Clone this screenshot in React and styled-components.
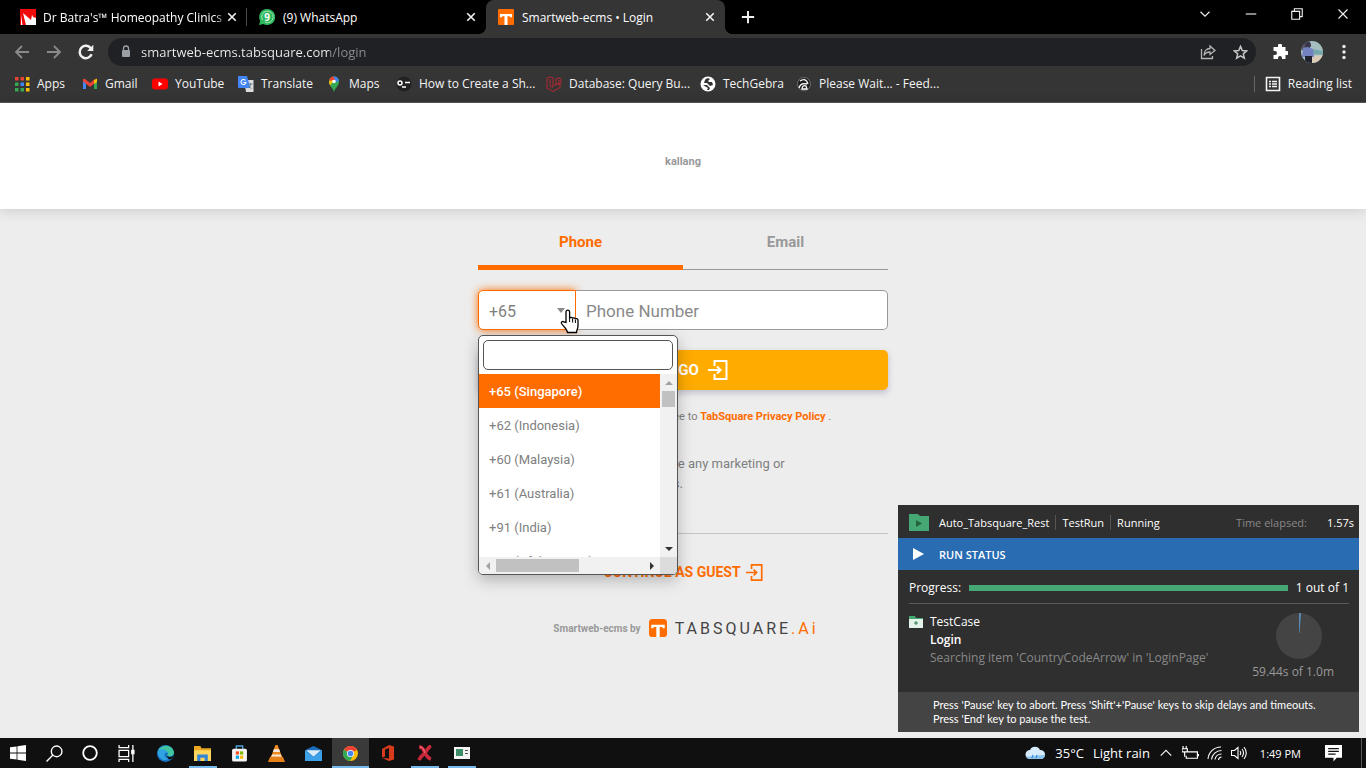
import React from "react";
import styled, { createGlobalStyle, css } from "styled-components";

const ui = '"Open Sans", "Noto Sans", sans-serif';
const brand = 'Roboto, "Liberation Sans", sans-serif';
const orange = "#ff6c00";

const GlobalStyle = createGlobalStyle`
  *, *::before, *::after { box-sizing: border-box; }
  body { margin: 0; background: #ececec; font-family: ${ui}; }
  button, input, select { font: inherit; color: inherit; margin: 0; }
  button { background: none; border: 0; padding: 0; cursor: pointer; }
  ul { list-style: none; margin: 0; padding: 0; }
  p { margin: 0; }
  svg { display: block; flex: none; }
`;

const Screen = styled.div`
  display: flex;
  flex-direction: column;
  min-height: 100vh;
`;

/* ---------- Browser chrome ---------- */

const TabStrip = styled.header`
  display: flex;
  height: 34px;
  padding-left: 8px;
  background: #000;
  color: #fff;
`;

const TabItem = styled.div`
  position: relative;
  display: flex;
  align-items: center;
  gap: 8px;
  width: 239px;
  padding: 0 9px 0 12px;
  font-size: 12px;
  border-radius: 8px 8px 0 0;
  background: ${(p) => (p.$active ? "#353535" : "transparent")};

  ${(p) => p.$divided && css`
    gap: 7px;
    &::after {
      content: "";
      position: absolute;
      right: 0;
      top: 8px;
      height: 18px;
      width: 1px;
      background: #4a4a4a;
    }
  `}
  ${(p) => p.$active && css`
    &::before, &::after {
      content: "";
      position: absolute;
      bottom: 0;
      width: 8px;
      height: 8px;
    }
    &::before {
      left: -8px;
      background: radial-gradient(circle at 0 0, #000 8px, #353535 8px);
    }
    &::after {
      right: -8px;
      background: radial-gradient(circle at 100% 0, #000 8px, #353535 8px);
    }
  `}
`;

const TabTitle = styled.span`
  flex: 1;
  min-width: 0;
  overflow: hidden;
  white-space: nowrap;
  ${(p) => p.$fade && css`
    margin-right: -6px;
    mask-image: linear-gradient(90deg, #000 94%, rgba(0, 0, 0, 0.3));
  `}
`;

const IconButton = styled.button`
  display: grid;
  place-items: center;
  width: ${(p) => p.$w || 32}px;
  height: ${(p) => p.$h || 28}px;
  color: ${(p) => p.$color || "#f1f1f1"};
  flex: none;
`;

const WindowControls = styled.div`
  display: flex;
  margin-left: auto;
`;

const Toolbar = styled.div`
  display: flex;
  align-items: center;
  height: 36px;
  padding: 0 6px;
  background: #353535;
`;

const AddressBar = styled.div`
  flex: 1;
  display: flex;
  align-items: center;
  height: 28px;
  margin: 0 8px 0 6px;
  padding-left: 13px;
  border-radius: 14px;
  background: #202124;
`;

const AddressInput = styled.input`
  flex: 1;
  min-width: 0;
  margin-left: 10px;
  padding: 0;
  border: 0;
  outline: 0;
  font-size: 13px;
  color: transparent;
  background: linear-gradient(90deg, #f1f1f1 188px, #8d8f93 188px);
  background-clip: text;
  -webkit-background-clip: text;
`;

const Avatar = styled.span`
  display: block;
  width: 22px;
  height: 22px;
  border-radius: 50%;
  overflow: hidden;
`;

const BookmarkBar = styled.nav`
  display: flex;
  align-items: center;
  height: 33px;
  padding: 0 14px 5px;
  background: #353535;
  border-bottom: 1px solid #555;
  color: #f4f4f4;
  font-size: 12px;
`;

const Bookmark = styled.a`
  display: flex;
  align-items: center;
  gap: 7px;
  width: ${(p) => (p.$w ? `${p.$w}px` : "auto")};
  color: inherit;
  text-decoration: none;
  white-space: nowrap;
`;

const ReadingList = styled.button`
  display: flex;
  align-items: center;
  gap: 7px;
  height: 16px;
  margin-left: auto;
  padding-left: 10px;
  border-left: 1px solid #666;
  white-space: nowrap;
`;

/* ---------- Login page ---------- */

const Page = styled.main`
  position: relative;
  flex: 1;
  background: #ededed;
  font-family: ${brand};
  color: #808080;
`;

const OutletHeader = styled.div`
  display: grid;
  place-items: center;
  height: 106px;
  padding-top: 10px;
  background: #fff;
  box-shadow: 0 2px 12px rgba(0, 0, 0, 0.14);
  font-size: 11px;
  font-weight: 700;
  color: #999;
`;

const Form = styled.form`
  width: 410px;
  max-width: 100%;
  margin: 0 auto;
`;

const MethodTabs = styled.div`
  display: flex;
  align-items: flex-end;
  height: 61px;
`;

const MethodTab = styled.button`
  flex: 1;
  height: 61px;
  padding-top: 9px;
  padding-bottom: ${(p) => (p.$active ? 0 : 4)}px;
  border-bottom: ${(p) => (p.$active ? `5px solid ${orange}` : "1px solid #999")};
  font-size: 15px;
  font-weight: 700;
  color: ${(p) => (p.$active ? orange : "#999")};
`;

const FieldRow = styled.div`
  position: relative;
  display: flex;
  height: 40px;
  margin-top: 20px;
`;

const CodeBox = styled.div`
  position: relative;
  width: 98px;
  border: 1px solid ${orange};
  border-radius: 5px 0 0 5px;
  background: #fff;
  box-shadow: 0 0 8px ${orange};
`;

const CodeSelect = styled.select`
  width: 100%;
  height: 100%;
  padding: 2px 10px 0;
  border: 0;
  outline: 0;
  appearance: none;
  font-size: 16px;
  background: transparent;
`;

const CodeCaret = styled.svg`
  position: absolute;
  right: 10px;
  top: 17px;
  pointer-events: none;
`;

const PhoneInput = styled.input`
  position: relative;
  flex: 1;
  min-width: 0;
  padding: 2px 10px 0;
  border: 1px solid #999;
  border-left: 0;
  border-radius: 0 5px 5px 0;
  outline: 0;
  background: #fff;
  font-size: 17px;
  &::placeholder { color: #8a8a8a; opacity: 1; }
`;

const Pointer = styled.svg`
  position: absolute;
  left: 82px;
  top: 18px;
  z-index: 3;
`;

const Dropdown = styled.div`
  position: absolute;
  z-index: 2;
  top: 45px;
  left: 0;
  width: 200px;
  border: 1px solid #555;
  border-radius: 5px;
  overflow: hidden;
  background: #fff;
  box-shadow: 0 5px 15px rgba(0, 0, 0, 0.25);
  font-size: 13px;
`;

const SearchBox = styled.div`
  padding: 4px;
`;

const SearchInput = styled.input`
  display: block;
  width: 100%;
  height: 30px;
  padding: 0 8px;
  border: 1px solid #555;
  border-radius: 5px;
  outline: 0;
`;

const Scroller = styled.div`
  display: grid;
  grid-template: 183px 17px / 1fr 17px;
`;

const OptionList = styled.ul`
  overflow: hidden;
`;

const Option = styled.li`
  height: 34px;
  padding: 1px 10px 0;
  line-height: 34px;
  white-space: nowrap;
  color: ${(p) => (p.$active ? "#fff" : "#808080")};
  background: ${(p) => (p.$active ? orange : "transparent")};
  font-weight: ${(p) => (p.$active ? 500 : 400)};
`;

const ScrollTrack = styled.div`
  display: flex;
  flex-direction: ${(p) => (p.$vertical ? "column" : "row")};
  align-items: center;
  background: #f1f1f1;
`;

const ScrollArrow = styled.span`
  display: grid;
  place-items: center;
  width: 17px;
  height: 17px;
`;

const ScrollThumb = styled.span`
  width: ${(p) => (p.$vertical ? 13 : 83)}px;
  height: ${(p) => (p.$vertical ? 16 : 13)}px;
  background: #c1c1c1;
  margin-${(p) => (p.$vertical ? "bottom" : "right")}: auto;
`;

const ScrollCorner = styled.div`
  background: #dcdcdc;
`;

const GoButton = styled.button`
  display: flex;
  align-items: center;
  justify-content: center;
  gap: 9px;
  width: 100%;
  height: 40px;
  margin-top: 20px;
  padding-left: 40px;
  border-radius: 5px;
  background: #ffab00;
  box-shadow: 0 3px 6px rgba(90, 90, 130, 0.3);
  color: #fff;
  font-size: 15px;
  font-weight: 700;
`;

const PolicyNote = styled.p`
  margin-top: 19px;
  padding-right: 4px;
  line-height: 16px;
  font-size: 11px;
  text-align: center;
`;

const PolicyLink = styled.a`
  color: ${orange};
  font-weight: 700;
  text-decoration: none;
`;

const Consent = styled.label`
  display: flex;
  align-items: flex-start;
  gap: 12px;
  margin-top: 29px;
  padding-left: 36px;
  height: 80px;
  border-bottom: 1px solid #c4c4c4;
  line-height: 20px;
  font-size: 13px;
`;

const GuestLink = styled.a`
  display: flex;
  align-items: center;
  justify-content: center;
  gap: 5px;
  margin-top: 28px;
  line-height: 20px;
  color: ${orange};
  font-size: 14px;
  font-weight: 700;
  text-decoration: none;
`;

const PoweredBy = styled.footer`
  display: flex;
  align-items: center;
  justify-content: center;
  gap: 8px;
  height: 20px;
  margin-top: 36px;
  padding-left: 6px;
  font-size: 10px;
  font-weight: 700;
  color: #999;
`;

const Wordmark = styled.span`
  font-size: 16px;
  font-weight: 400;
  letter-spacing: 3px;
  color: #444;
  b { color: ${orange}; font-weight: 400; }
`;

/* ---------- Test run overlay ---------- */

const RunPanel = styled.aside`
  position: absolute;
  right: 7px;
  bottom: 6px;
  z-index: 4;
  width: 461px;
  background: #2f2f2f;
  color: #fff;
  font-family: ${ui};
  font-size: 12px;
  white-space: nowrap;
`;

const RunHeader = styled.div`
  display: flex;
  align-items: center;
  height: 33px;
  padding: 2px 5px 0 11px;
  font-size: 11px;
`;

const Crumb = styled.span`
  padding: 0 6px;
  border-left: ${(p) => (p.$first ? "0" : "1px solid #555")};
  margin-left: ${(p) => (p.$first ? 4 : 0)}px;
`;

const Elapsed = styled.span`
  display: flex;
  gap: 20px;
  margin-left: auto;
  color: #888;
  b { color: #fff; font-weight: 400; }
`;

const RunBanner = styled.div`
  display: flex;
  align-items: center;
  gap: 15px;
  height: 32px;
  padding-left: 14px;
  background: #2a6cb2;
  font-size: 11px;
  font-weight: 600;
`;

const ProgressRow = styled.div`
  display: flex;
  align-items: center;
  gap: 8px;
  height: 34px;
  margin: 0 10px 0 11px;
  padding-top: 2px;
  border-bottom: 1px solid #5a5a5a;
`;

const ProgressBar = styled.div`
  flex: 1;
  height: 6px;
  background: #45a874;
`;

const RunBody = styled.div`
  display: flex;
  justify-content: space-between;
  height: 88px;
  padding: 9px 25px 0 11px;
`;

const CaseGrid = styled.div`
  display: grid;
  grid-template-columns: 16px auto;
  column-gap: 5px;
  align-content: start;
  align-items: center;
  line-height: 18px;
`;

const CaseLine = styled.span`
  grid-column: 2;
  color: ${(p) => (p.$dim ? "#888" : "#fff")};
  font-weight: ${(p) => (p.$strong ? 600 : 400)};
`;

const TimeoutClock = styled.div`
  display: flex;
  flex-direction: column;
  align-items: center;
  gap: 4px;
  color: #999;
  svg { margin-left: 12px; }
`;

const RunHint = styled.p`
  padding: 6px 35px;
  line-height: 14px;
  font-family: Lato, ${ui};
  font-size: 11px;
  background: #444;
`;

/* ---------- Taskbar ---------- */

const Taskbar = styled.footer`
  display: flex;
  align-items: center;
  height: 30px;
  background: #101010;
  color: #fff;
`;

const TaskGroup = styled.div`
  display: flex;
  margin-right: 3px;
`;

const TaskButton = styled.button`
  display: grid;
  place-items: center;
  width: ${(p) => (p.$app ? 37 : 36)}px;
  height: 30px;
  background:
    linear-gradient(#76b9ed, #76b9ed) center bottom / ${(p) => (!p.$running ? "0" : p.$focused ? "100%" : "28px")} 2px no-repeat
    ${(p) => (p.$focused ? "#3a3a3a" : "transparent")};
`;

const Tray = styled.div`
  display: flex;
  align-items: center;
  gap: 8px;
  height: 30px;
  margin-left: auto;
  margin-right: 4px;
  padding-right: 19px;
  border-right: 1px solid #555;
  white-space: nowrap;
`;

const Weather = styled.button`
  display: flex;
  align-items: center;
  gap: 9px;
  font-size: 13px;
`;

const Clock = styled.time`
  font-size: 11px;
  margin: 0 15px 0 5px;
`;

/* ---------- Icons ---------- */

const Line = ({ s = 16, w = 1.5, children }) => (
  <svg width={s} height={s} viewBox="0 0 16 16" fill="none" stroke="currentColor" strokeWidth={w}>{children}</svg>
);
const Art = ({ s = 16, children }) => (
  <svg width={s} height={s} viewBox="0 0 16 16">{children}</svg>
);

const CloseIcon = () => <Line s={12} w={2.2}><path d="M3 3l10 10M13 3L3 13" /></Line>;

const BatraIcon = () => (
  <Art>
    <path fill="#f00b0b" d="M0 0h16v16H0z" />
    <path fill="#fff" d="M3 4l8 7 1-5 4 2v8H6z" />
    <path fill="#fff" d="M1 6l1.500 10H1z" />
    <path fill="#f00b0b" d="M12 5l4 1v3l-3-1z" />
  </Art>
);
const WhatsAppIcon = () => (
  <Art>
    <path fill="#2eb85c" d="M8 0a8 8 0 1 1-3.700 15L0 16l1.200-4A8 8 0 0 1 8 0z" />
    <path d="M3.500 11A5.800 5.800 0 1 1 6 13.200" fill="none" stroke="#bdebca" strokeWidth=".8" />
    <text x="8" y="11.500" textAnchor="middle" fontFamily="Open Sans" fontSize="10" fontWeight="700" fill="#fff">9</text>
  </Art>
);
const TabSquareIcon = ({ s = 16, r = 1 }) => (
  <Art s={s}>
    <rect width="16" height="16" rx={r} fill={orange} />
    <path fill="#fff" d="M2 5h12v3.200h-2V7.200H9.500V16h-3V7.200H4v1H2z" />
  </Art>
);
const BackIcon = () => <Line w={1.8}><path d="M15 8H2M8 2L2 8l6 6" /></Line>;
const ForwardIcon = () => <Line w={1.8}><path d="M1 8h13M8 2l6 6-6 6" /></Line>;
const ReloadIcon = () => (
  <Line s={18} w={2.2}><path d="M13 10a5.500 5.500 0 1 1-.5-5" /><path d="M14.500 1.500V7H9z" fill="currentColor" stroke="none" /></Line>
);
const LockIcon = () => (
  <svg width="10" height="14" viewBox="0 0 10 14">
    <rect x="1" y="5" width="8" height="7" rx="1" fill="#9aa0a6" />
    <path d="M2.500 5V3.500a2.500 2.500 0 0 1 5 0V5" fill="none" stroke="#9aa0a6" strokeWidth="1.300" />
  </svg>
);
const ShareIcon = () => (
  <Line w={1.3}><path d="M1.500 5v9.500h11V12" /><path d="M10 2l5 4.500-5 4V8C7 8 5 9 4 11.500 4 7 6.500 4.500 10 4.500z" /></Line>
);
const StarIcon = () => (
  <Line s={15} w={1.6}><path d="M8 1.500l1.900 4.400 4.700.4-3.600 3.100 1.100 4.700L8 11.600l-4.100 2.500L5 9.400 1.400 6.300l4.700-.4z" /></Line>
);
const PuzzleIcon = () => (
  <Art><path fill="#fff" d="M6 1.500a2 2 0 0 1 4 0V3h3.500v4H15a2 2 0 0 1 0 4h-1.500v4H10v-1a2 2 0 0 0-4 0v1H1.500v-4H3a2 2 0 0 0 0-4H1.500V3H6z" /></Art>
);
const KebabIcon = () => (
  <Art><circle cx="8" cy="2.500" r="1.700" fill="#eee" /><circle cx="8" cy="8" r="1.700" fill="#eee" /><circle cx="8" cy="13.500" r="1.700" fill="#eee" /></Art>
);
const Portrait = () => (
  <svg width="22" height="22" viewBox="0 0 22 22">
    <path fill="#a5bfc0" d="M0 0h22v22H0z" />
    <path fill="#75a7ad" d="M11 8l11 2v4l-11-1z" />
    <path fill="#d9cbb5" d="M10 15l12-1v8H10z" />
    <path fill="#545366" d="M0 0h9v9H0z" />
    <circle cx="7" cy="4" r="3" fill="#39354a" />
    <path fill="#7582c1" d="M2 7l5-1 5 2 1 8H1z" />
    <path fill="#20212f" d="M4 15h7v7H4z" />
  </svg>
);
const AppsIcon = () => (
  <Art>
    {["#ea4335", "#ea4335", "#fbbc04", "#34a853", "#4285f4", "#fbbc04", "#34a853", "#34a853", "#fbbc04"].map((c, i) => (
      <rect key={i} x={1 + (i % 3) * 5.5} y={1 + Math.floor(i / 3) * 5.5} width="3.500" height="3.500" fill={c} />
    ))}
  </Art>
);
const GmailIcon = () => (
  <Art>
    <path fill="#4285f4" d="M1 4v9h3V7z" /><path fill="#34a853" d="M15 4v9h-3V7z" />
    <path fill="#ea4335" d="M1 3h2l5 4 5-4v4l-5 4-5-4-2-1.500z" />
    <path fill="#fbbc04" d="M12 4l3-1.500V6l-3 2z" />
  </Art>
);
const YouTubeIcon = () => (
  <Art><rect y="2.500" width="16" height="11" rx="3" fill="#f00" /><path d="M6.500 5.500v5L10.500 8z" fill="#fff" /></Art>
);
const TranslateIcon = () => (
  <Art>
    <path fill="#dcdcdc" d="M6 4h9.500v12H8z" />
    <path fill="#4285f4" d="M0 0h9l3.500 12H1a1 1 0 0 1-1-1z" />
    <path d="M7.500 4.500a2.500 2.500 0 1 0 .5 2H5.500" fill="none" stroke="#fff" strokeWidth="1.100" />
    <path d="M10.500 8h4M12.500 7v1c0 2-1 3-2 4m0-2.500c.5 1.500 2 2.500 3 3" fill="none" stroke="#607d8b" strokeWidth=".9" />
  </Art>
);
const MapsIcon = () => (
  <Art>
    <path fill="#34a853" d="M8 16C7 12 3 10 3 5.500a5 5 0 0 1 10 0C13 10 9 12 8 16z" />
    <path fill="#4285f4" d="M7 .6A5 5 0 0 1 13 5L10 6z" /><path fill="#ea4335" d="M3.300 4A5 5 0 0 1 7.500.5L9 4 5 7z" />
    <path fill="#fbbc04" d="M3 5l5-1-3.800 5.500A6 6 0 0 1 3 5z" /><circle cx="8" cy="5.500" r="1.800" fill="#fff" />
  </Art>
);
const GuideIcon = () => (
  <Art><circle cx="8" cy="8" r="7.500" fill="#222" /><g fill="none" stroke="#fff" strokeWidth="1.500"><circle cx="4" cy="7" r="2" /><path d="M9 6.500h5M6 11h4" /></g></Art>
);
const LaravelIcon = () => (
  <Line w={1.2}><g stroke="#9c2b32"><path d="M1 2l3-1 3 1v8l6-3V4M1 2v10l6 3.500 7-4V8M4 3v7l3 1.500M10 3l3-1 2 1v4l-3 1.500-2-1z" /></g></Line>
);
const GlobeIcon = () => (
  <Art><circle cx="8" cy="8" r="7.500" fill="#fff" /><path fill="#333" d="M5 4c1-2 4-2 5-1L8 5l1 1h3l1 3-3 1-3-3H4zM3 9l4 0 3 3-1 2H7l1-2z" /></Art>
);
const FeedIcon = () => (
  <Line w={1.3}><circle cx="8" cy="8" r="6.500" fill="#1c1c1c" stroke="#999" strokeWidth=".6" /><path d="M4 5c4-3 7-1 8 3M3 12c1-4 4-5 8-4M6 13c0-3 2-4 4-3l1 3z" stroke="#fff" /></Line>
);
const ReadingIcon = () => (
  <Line w={1.6}><path d="M1.500 1.500h13v13h-13zM4 5.500h2M7 5.500h5M4 8h2M7 8h5M4 10.500h2M7 10.500h5" /></Line>
);
const EnterIcon = ({ s = 20 }) => (
  <svg width={s} height={s} viewBox="0 0 20 20" fill="none" stroke="currentColor" strokeWidth="2">
    <path d="M6.500 6V1h12v18h-12v-5M0 10h12M9 6.500l3.500 3.500L9 13.500" />
  </svg>
);
const Triangle = ({ d, c }) => <svg width="8" height="8" viewBox="0 0 8 8"><path d={d} fill={c} /></svg>;
const FolderRunIcon = () => (
  <svg width="20" height="17" viewBox="0 0 20 17"><path fill="#45a874" d="M0 0h9l2 2h9v15H0z" /><path fill="#24633f" d="M7 6l6 3.500L7 13z" /></svg>
);
const FolderCaseIcon = () => (
  <svg width="14" height="12" viewBox="0 0 14 12"><path fill="#45a874" d="M0 0h6l1 2h7v3H0z" /><path fill="#e4f3ea" d="M0 3h14v9H0z" /><path stroke="#2d7d50" d="M7 5v4M5 7h4" /></svg>
);

const WindowsIcon = () => <Art><path fill="#fff" d="M0 2.300l6.600-.9v6.200H0zM7.400 1.300L16 0v7.600H7.400zM0 8.400h6.600v6.200L0 13.700zM7.400 8.400H16V16l-8.600-1.300z" /></Art>;
const SearchIcon = () => <Line s={17} w={1.3}><circle cx="10" cy="6" r="5" /><path d="M6.500 9.500L.5 15.500" /></Line>;
const CortanaIcon = () => <Line s={16} w={1.8}><circle cx="8" cy="8" r="6.800" /></Line>;
const TaskViewIcon = () => <Line s={17} w={1.2}><path d="M1 0v2.500h9V0M1 16v-2.500h9V16M1 5h9v6H1zM14 0v16" /><path d="M13 5h2v3h-2z" fill="currentColor" /></Line>;
const EdgeIcon = () => (
  <Art s={17}>
    <circle cx="8" cy="8" r="8" fill="#1673c4" />
    <path fill="#3fc5a0" d="M1 5C4-1 15-1 16 7c0 4-5 4.500-6.500 3C12 7 8 4 1 5z" />
    <path fill="#31a3e2" d="M.5 6C4 2.500 9 4 9.500 7 6 7 6 12 11 13c-4 3-10 0-10.500-7z" />
    <path fill="#101010" d="M9.500 10c2 2 5 1.500 6.500-1-.5 2-1.500 3.500-3 4.500-2 0-3.500-1.500-3.500-3.500z" />
  </Art>
);
const ExplorerIcon = () => <Art s={17}><path fill="#e9a820" d="M0 1h6l1 2h9v12H0z" /><path fill="#ffd75e" d="M0 5h16v10H0z" /><path fill="#3386d6" d="M3 9h10v6h-3v-3H6v3H3z" /></Art>;
const StoreIcon = () => (
  <Art s={17}><path d="M5 4V1h6v3" fill="none" stroke="#4aa3d8" strokeWidth="1.300" /><rect x="1" y="3.500" width="14" height="12" rx="1.500" fill="#f4f4f4" />
    <path fill="#f25022" d="M4.500 6H7.500v3h-3z" /><path fill="#7fba00" d="M8.500 6h3v3h-3z" /><path fill="#00a4ef" d="M4.500 10h3v3h-3z" /><path fill="#ffb900" d="M8.500 10h3v3h-3z" /></Art>
);
const VlcIcon = () => <Art s={17}><path fill="#f08a1c" d="M7 0h2l4.500 12h-11z" /><path fill="#f7e9dc" d="M5.500 4h5l.9 2.500H4.600zM3.800 9h8.400l.8 2H3z" /><path fill="#e7811a" d="M2 11h12l2 5H0z" /></Art>;
const MailIcon = () => <Art s={17}><path fill="#1b6dbd" d="M0 5l8-4 8 4v10H0z" /><path fill="#d9ecf9" d="M1 5h14l-7 6z" /><path fill="#3ba0e6" d="M0 5l8 6 8-6v10H0z" /></Art>;
const ChromeIcon = () => (
  <Art s={15}><circle cx="8" cy="8" r="8" fill="#fbbc04" /><path fill="#ea4335" d="M8 8L1 4a8 8 0 0 1 14 0z" /><path fill="#34a853" d="M1 4a8 8 0 0 0 6.500 12L11 9.500 8 8z" /><circle cx="8" cy="8" r="3.800" fill="#fff" /><circle cx="8" cy="8" r="3" fill="#4285f4" /></Art>
);
const OfficeIcon = () => <Art s={16}><path fill="#d83b1c" d="M2 4l7-4 5 1.500v13L9 16l-7-3 7 .5V3L5 4.500v7l-3 1z" /></Art>;
const RanorexIcon = () => <Art s={16}><path d="M2 2c5 0 5 5 6 6s2 5 6 6M14 1c-3 1-5 6-6 7s-4 3-6 7" fill="none" stroke="#c9293a" strokeWidth="3.600" /><path d="M3 2c4 0 4 5 5 6" fill="none" stroke="#f28b95" /></Art>;
const ConsoleIcon = () => <Art s={16}><path fill="#f4f4f4" d="M0 2h16v12H0z" /><path fill="#3e8d69" d="M2 4h7v7H2z" /><path fill="#555" d="M11 5h3v1h-3zM11 8h3v1h-3z" /></Art>;
const CloudIcon = () => (
  <svg width="21" height="16" viewBox="0 0 21 16"><path fill="#d6ebfb" d="M5 14a4.500 4.500 0 0 1 0-9A5.500 5.500 0 0 1 15 5a4.500 4.500 0 0 1 1 9z" /><path fill="#8cc3ee" d="M5 14a4 4 0 0 1-4-3c5 2 9-1 19-1a4.300 4.300 0 0 1-4 4z" /><path d="M8 10l-1 3M12 10l-1 3" stroke="#3f8fe0" strokeWidth="1.400" /></svg>
);
const BatteryIcon = () => <Line s={17} w={1.1}><path d="M5 6.500h9.500v6H4V10M15.500 8.500v2M1 1v2M4 1v2M0 3.500h5v3H0zM2.500 7v4" /></Line>;
const WifiIcon = () => <Line s={16} w={1.1}><path d="M1 14A13 13 0 0 1 14 2M4.500 14.500A10 10 0 0 1 14.500 5.500M8 14.500a6.500 6.500 0 0 1 6.500-5.500M11.500 15a3.500 3.500 0 0 1 3-3" /></Line>;
const SpeakerIcon = () => <Line s={16} w={1.1}><path d="M.5 5.500h3l3.500-3v11l-3.500-3h-3zM9 6c1 1.300 1 2.700 0 4M11 4c2 2.600 2 5.400 0 8M13 2c3 4 3 8 0 12" /></Line>;
const NoticeIcon = () => <Art s={17}><path fill="#fff" d="M0 0h16v12H11l-3 3.500V12H0z" /><path stroke="#111" strokeWidth="1.200" d="M3 3.500h10M3 6h10M3 8.500h7" /></Art>;

const bookmarks = [
  ["Apps", AppsIcon, 68],
  ["Gmail", GmailIcon, 70],
  ["YouTube", YouTubeIcon, 86],
  ["Translate", TranslateIcon, 88],
  ["Maps", MapsIcon, 70],
  ["How to Create a Sh...", GuideIcon, 150],
  ["Database: Query Bu...", LaravelIcon, 154],
  ["TechGebra", GlobeIcon, 96],
  ["Please Wait... - Feed...", FeedIcon],
];

const countries = ["+65 (Singapore)", "+62 (Indonesia)", "+60 (Malaysia)", "+61 (Australia)", "+91 (India)", "+93 (Afghanistan)"];

const apps = [
  ["Edge", EdgeIcon], ["File Explorer", ExplorerIcon, true], ["Store", StoreIcon], ["VLC", VlcIcon], ["Mail", MailIcon],
  ["Chrome", ChromeIcon, true, true], ["Office", OfficeIcon], ["Ranorex", RanorexIcon, true], ["Console", ConsoleIcon, true],
];

function BrowserChrome() {
  return (
    <>
      <TabStrip>
        <TabItem $divided>
          <BatraIcon />
          <TabTitle $fade>Dr Batra's™ Homeopathy Clinics</TabTitle>
          <IconButton $w={12} aria-label="Close tab"><CloseIcon /></IconButton>
        </TabItem>
        <TabItem>
          <WhatsAppIcon />
          <TabTitle>(9) WhatsApp</TabTitle>
          <IconButton $w={12} aria-label="Close tab"><CloseIcon /></IconButton>
        </TabItem>
        <TabItem $active>
          <TabSquareIcon />
          <TabTitle>Smartweb-ecms • Login</TabTitle>
          <IconButton $w={12} aria-label="Close tab"><CloseIcon /></IconButton>
        </TabItem>
        <IconButton $w={46} $h={34} aria-label="New tab"><Line s={14} w={2.2}><path d="M8 1v14M1 8h14" /></Line></IconButton>
        <WindowControls>
          <IconButton $w={46} aria-label="Search tabs"><Line s={12}><path d="M2 5l6 6 6-6" /></Line></IconButton>
          <IconButton $w={46} aria-label="Minimize"><Line s={12}><path d="M1 8h14" /></Line></IconButton>
          <IconButton $w={46} aria-label="Restore"><Line s={12}><path d="M1 4.500h10.500V15H1zM4.500 4V1H15v10.500h-3" /></Line></IconButton>
          <IconButton $w={46} aria-label="Close"><Line s={12}><path d="M2 2l12 12M14 2L2 14" /></Line></IconButton>
        </WindowControls>
      </TabStrip>
      <Toolbar>
        <IconButton aria-label="Back" $color="#8a8a8a"><BackIcon /></IconButton>
        <IconButton aria-label="Forward" $color="#8a8a8a"><ForwardIcon /></IconButton>
        <IconButton aria-label="Reload"><ReloadIcon /></IconButton>
        <AddressBar>
          <LockIcon />
          <AddressInput aria-label="Address" defaultValue="smartweb-ecms.tabsquare.com/login" />
          <IconButton aria-label="Share" $color="#b5b5b5"><ShareIcon /></IconButton>
          <IconButton aria-label="Bookmark this page" $color="#c5c5c5"><StarIcon /></IconButton>
        </AddressBar>
        <IconButton aria-label="Extensions"><PuzzleIcon /></IconButton>
        <IconButton aria-label="Profile"><Avatar><Portrait /></Avatar></IconButton>
        <IconButton aria-label="Menu"><KebabIcon /></IconButton>
      </Toolbar>
      <BookmarkBar>
        {bookmarks.map(([name, Icon, w]) => (
          <Bookmark key={name} href="#" $w={w}><Icon />{name}</Bookmark>
        ))}
        <ReadingList><ReadingIcon />Reading list</ReadingList>
      </BookmarkBar>
    </>
  );
}

function CountryDropdown() {
  return (
    <Dropdown>
      <SearchBox><SearchInput type="search" aria-label="Search country code" /></SearchBox>
      <Scroller>
        <OptionList role="listbox" aria-label="Country codes">
          {countries.map((c, i) => (
            <Option key={c} role="option" aria-selected={i === 0} $active={i === 0}>{c}</Option>
          ))}
        </OptionList>
        <ScrollTrack $vertical>
          <ScrollArrow><Triangle d="M0 6l4-4 4 4z" c="#a3a3a3" /></ScrollArrow>
          <ScrollThumb $vertical />
          <ScrollArrow><Triangle d="M0 2l4 4 4-4z" c="#333" /></ScrollArrow>
        </ScrollTrack>
        <ScrollTrack>
          <ScrollArrow><Triangle d="M6 0L2 4l4 4z" c="#a3a3a3" /></ScrollArrow>
          <ScrollThumb />
          <ScrollArrow><Triangle d="M2 0l4 4-4 4z" c="#333" /></ScrollArrow>
        </ScrollTrack>
        <ScrollCorner />
      </Scroller>
    </Dropdown>
  );
}

function RunStatus() {
  return (
    <RunPanel>
      <RunHeader>
        <FolderRunIcon />
        <Crumb $first>Auto_Tabsquare_Rest</Crumb>
        <Crumb>TestRun</Crumb>
        <Crumb>Running</Crumb>
        <Elapsed>Time elapsed: <b>1.57s</b></Elapsed>
      </RunHeader>
      <RunBanner>
        <svg width="12" height="12" viewBox="0 0 12 12"><path d="M1 0l11 6-11 6z" fill="#fff" /></svg>
        RUN STATUS
      </RunBanner>
      <ProgressRow>
        Progress:
        <ProgressBar role="progressbar" aria-label="Progress" aria-valuenow={1} aria-valuemax={1} />
        1 out of 1
      </ProgressRow>
      <RunBody>
        <CaseGrid>
          <FolderCaseIcon />
          <CaseLine>TestCase</CaseLine>
          <CaseLine $strong>Login</CaseLine>
          <CaseLine $dim>Searching item 'CountryCodeArrow' in 'LoginPage'</CaseLine>
        </CaseGrid>
        <TimeoutClock>
          <svg width="46" height="46" viewBox="0 0 46 46"><circle cx="23" cy="23" r="23" fill="#444" /><path d="M23 0h2l-1.500 20H23z" fill="#5b8db8" /></svg>
          59.44s of 1.0m
        </TimeoutClock>
      </RunBody>
      <RunHint>
        Press 'Pause' key to abort. Press 'Shift'+'Pause' keys to skip delays and timeouts.<br />
        Press 'End' key to pause the test.
      </RunHint>
    </RunPanel>
  );
}

export default function App() {
  return (
    <Screen>
      <GlobalStyle />
      <BrowserChrome />
      <Page>
        <OutletHeader>kallang</OutletHeader>
        <Form onSubmit={(e) => e.preventDefault()}>
          <MethodTabs role="tablist">
            <MethodTab type="button" role="tab" aria-selected $active>Phone</MethodTab>
            <MethodTab type="button" role="tab" aria-selected={false}>Email</MethodTab>
          </MethodTabs>
          <FieldRow>
            <CodeBox>
              <CodeSelect aria-label="Country code" defaultValue="+65">
                <option>+65</option>
                <option>+62</option>
                <option>+60</option>
              </CodeSelect>
              <CodeCaret width="8" height="5" viewBox="0 0 8 5"><path d="M0 0h8L4 5z" fill="#8a8a8a" /></CodeCaret>
            </CodeBox>
            <PhoneInput type="tel" aria-label="Phone number" placeholder="Phone Number" />
            <CountryDropdown />
            <Pointer width="20" height="26" viewBox="0 0 20 26">
              <path d="M6 14.500V4a1.800 1.800 0 0 1 3.600 0v6.500c0-1.600 3-1.600 3 .3 0-1.300 2.800-1.200 2.800.6 0-1.200 2.600-1 2.600.9V18c0 3-1.500 4-1.500 6.500h-9C7 21 3.500 18.500 1.500 15.500c-.7-1.700 1-2.600 2.300-1.500z" fill="#fff" stroke="#000" strokeWidth="1.300" />
              <path d="M9.600 10v4M12.600 11v3.500M15.400 12v3" stroke="#000" />
            </Pointer>
          </FieldRow>
          <GoButton type="submit">GO<EnterIcon /></GoButton>
          <PolicyNote>
            By continuing, you hereby agree to <PolicyLink href="#">TabSquare Privacy Policy</PolicyLink> .
          </PolicyNote>
          <Consent>
            <input type="checkbox" />
            <span>I would not like to receive any marketing or<br />promotional newsletters.</span>
          </Consent>
          <GuestLink href="#">CONTINUE AS GUEST<EnterIcon s={17} /></GuestLink>
          <PoweredBy>
            Smartweb-ecms by
            <TabSquareIcon s={18} r={3} />
            <Wordmark>TABSQUARE<b>.Ai</b></Wordmark>
          </PoweredBy>
        </Form>
        <RunStatus />
      </Page>
      <Taskbar>
        <TaskGroup>
          <TaskButton aria-label="Start"><WindowsIcon /></TaskButton>
          <TaskButton aria-label="Search"><SearchIcon /></TaskButton>
          <TaskButton aria-label="Cortana"><CortanaIcon /></TaskButton>
          <TaskButton aria-label="Task view"><TaskViewIcon /></TaskButton>
        </TaskGroup>
        <TaskGroup>
          {apps.map(([name, Icon, running, focused]) => (
            <TaskButton key={name} aria-label={name} $app $running={running} $focused={focused}><Icon /></TaskButton>
          ))}
        </TaskGroup>
        <Tray>
          <Weather><CloudIcon /><span>35°C</span><span>Light rain</span></Weather>
          <IconButton $w={16} aria-label="Hidden icons"><Line s={14} w={1.4}><path d="M2 11l6-6 6 6" /></Line></IconButton>
          <BatteryIcon />
          <WifiIcon />
          <SpeakerIcon />
          <Clock>1:49 PM</Clock>
          <IconButton $w={18} aria-label="Notifications"><NoticeIcon /></IconButton>
        </Tray>
      </Taskbar>
    </Screen>
  );
}
